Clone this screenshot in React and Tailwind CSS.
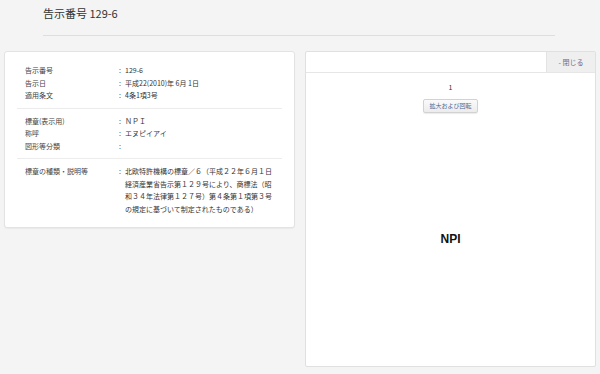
const rowsA = [
  { label: "告示番号", value: "129-6" },
  { label: "告示日", value: "平成22(2010)年 6月 1日" },
  { label: "適用条文", value: "4条1項3号" },
];

const rowsB = [
  { label: "標章(表示用)", value: "ＮＰＩ" },
  { label: "称呼", value: "エヌピイアイ" },
  { label: "図形等分類", value: "" },
];

const descLines = [
  "北欧特許機構の標章／６（平成２２年６月１日",
  "経済産業省告示第１２９号により、商標法（昭",
  "和３４年法律第１２７号）第４条第１項第３号",
  "の規定に基づいて制定されたものである）",
];

const Row = ({ label, children }) => (
  <div className="flex pl-[8px] pr-[8px]">
    <div className="w-[94px] shrink-0 text-[#444]">{label}</div>
    <div className="w-[6px] shrink-0 text-[#444]">:</div>
    <div className="flex-1 text-[#333]">{children}</div>
  </div>
);

export default function App() {
  return (
    <div className="min-h-screen bg-[#f4f4f4] font-['Noto_Sans_CJK_JP',sans-serif]">
      <div className="ml-[43px] mr-[45px] pt-[5px] pb-[14px] border-b border-[#dedede]">
        <h1 className="text-[11px] leading-[16px] text-[#333]">告示番号 129-6</h1>
      </div>

      <div className="flex items-start gap-[10px] pl-[4px] pt-[15px]">
        {/* details card */}
        <div className="w-[291px] rounded-[3px] border border-[#e3e3e3] bg-white px-[12px] pt-[12px] pb-[12px] text-[7px] leading-[12.5px] shadow-[0_1px_1px_rgba(0,0,0,0.04)]">
          <div>
            {rowsA.map((r) => (
              <Row key={r.label} label={r.label}>{r.value}</Row>
            ))}
          </div>
          <div className="my-[6px] border-t border-[#ececec]" />
          <div>
            {rowsB.map((r) => (
              <Row key={r.label} label={r.label}>{r.value}</Row>
            ))}
          </div>
          <div className="my-[6px] border-t border-[#ececec]" />
          <Row label="標章の種類・説明等">
            {descLines.map((line) => (
              <div key={line}>{line}</div>
            ))}
          </Row>
        </div>

        {/* image card */}
        <div className="flex h-[316px] w-[291px] flex-col rounded-[2px] border border-[#e0e0e0] bg-white">
          <div className="flex h-[21px] shrink-0 border-b border-[#e6e6e6]">
            <div className="flex-1" />
            <button className="w-[49px] border-l border-[#e3e3e3] bg-[#efefef] text-[7px] text-[#56739b]">
              - 閉じる
            </button>
          </div>
          <div className="flex flex-col items-center pt-[8px]">
            <div className="text-[7px] leading-[12px] text-[#333]">1</div>
            <button className="mt-[6px] h-[14px] w-[55px] rounded-[2px] border border-[#d2d2d2] bg-gradient-to-b from-[#fafafa] to-[#ececec] text-[6px] leading-[12px] text-[#4a6590] shadow-[0_1px_1px_rgba(0,0,0,0.08)]">
              拡大および回転
            </button>
            <div className="mt-[119px] font-['Liberation_Sans',Arial,sans-serif] text-[12px] font-bold leading-[14px] text-[#111]">
              NPI
            </div>
          </div>
        </div>
      </div>
    </div>
  );
}
